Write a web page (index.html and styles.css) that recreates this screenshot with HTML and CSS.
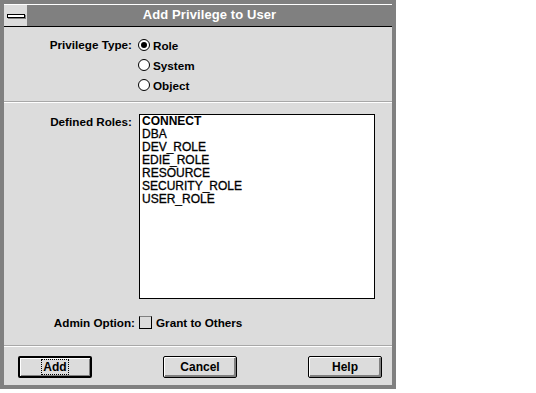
FILE: index.html
```html
<!DOCTYPE html>
<html lang="en">
<head>
  <meta charset="UTF-8">
  <title>Add Privilege to User</title>
  <link rel="stylesheet" href="styles.css">
</head>
<body>
  <div class="window">
    <div class="titlebar">
      <div class="sysmenu"><span class="sysbar"></span></div>
      <div class="title">Add Privilege to User</div>
    </div>

    <div class="section types">
      <div class="label">Privilege Type:</div>
      <div class="radios">
        <label class="radio"><span class="dot checked"></span>Role</label>
        <label class="radio"><span class="dot"></span>System</label>
        <label class="radio"><span class="dot"></span>Object</label>
      </div>
    </div>

    <div class="sep"></div>

    <div class="section roles">
      <div class="field">
        <div class="label">Defined Roles:</div>
        <ul class="listbox">
          <li class="current">CONNECT</li>
          <li>DBA</li>
          <li>DEV_ROLE</li>
          <li>EDIE_ROLE</li>
          <li>RESOURCE</li>
          <li>SECURITY_ROLE</li>
          <li>USER_ROLE</li>
        </ul>
      </div>
      <div class="field admin">
        <div class="label">Admin Option:</div>
        <label class="check"><span class="box"></span>Grant to Others</label>
      </div>
    </div>

    <div class="sep"></div>

    <div class="buttons">
      <button class="btn default"><span class="focus">Add</span></button>
      <button class="btn">Cancel</button>
      <button class="btn">Help</button>
    </div>
  </div>
</body>
</html>
```

FILE: styles.css
```css
body {
  margin: 0;
  background: #fff;
  font-family: "Liberation Sans", Arial, sans-serif;
  font-size: 11.7px;
  font-weight: bold;
  color: #000;
}
.window {
  width: 396px;
  height: 389px;
  box-sizing: border-box;
  border: 4px solid #808080;
  background: #dcdcdc;
  display: flex;
  flex-direction: column;
}
.titlebar {
  display: flex;
  height: 22px;
  border-bottom: 1px solid #000;
  background: #808080;
}
.sysmenu {
  width: 23px;
  background: #dcdcdc;
  border-top: 1px solid #fff;
  display: flex;
  align-items: center;
  justify-content: center;
}
.sysbar {
  width: 16px;
  height: 2px;
  background: #fff;
  border: 1px solid #000;
  box-shadow: 1px 1px 0 #808080;
}
.title {
  flex: 1;
  border-top: 1px solid #fff;
  color: #fff;
  font-size: 13px;
  font-weight: bold;
  letter-spacing: 0.1px;
  text-align: center;
  line-height: 20px;
}
.label {
  text-align: right;
}
.types {
  height: 74px;
  box-sizing: border-box;
  padding-top: 8px;
  display: grid;
  grid-template-columns: 128px 1fr;
  column-gap: 6px;
}
.types .label {
  line-height: 20px;
}
.radio {
  display: flex;
  align-items: center;
  gap: 3px;
  height: 20px;
}
.dot {
  width: 10px;
  height: 10px;
  border: 1px solid #000;
  border-radius: 50%;
  background: #fff;
  box-sizing: content-box;
  display: flex;
  align-items: center;
  justify-content: center;
}
.dot.checked::after {
  content: "";
  width: 6px;
  height: 6px;
  border-radius: 50%;
  background: #000;
}
.sep {
  height: 1px;
  background: #a8a8a8;
  border-bottom: 1px solid #fff;
}
.roles {
  height: 242px;
  box-sizing: border-box;
  padding-top: 11px;
}
.field {
  display: grid;
  grid-template-columns: 128px 236px;
  column-gap: 7px;
}
.roles .label {
  padding-top: 1px;
  line-height: 13px;
}
.listbox {
  list-style: none;
  margin: 0;
  height: 185px;
  box-sizing: border-box;
  padding: 0 0 0 2px;
  border: 1px solid #000;
  background: #fff;
  font-weight: normal;
  font-size: 12px;
  -webkit-text-stroke: 0.3px #000;
}
.listbox li {
  line-height: 13px;
}
.listbox .current {
  font-weight: bold;
  -webkit-text-stroke: 0;
}
.admin {
  margin-top: 14px;
  height: 18px;
  align-items: center;
}
.admin .label {
  padding-top: 0;
  margin-right: -3px;
}
.check {
  display: flex;
  align-items: center;
  gap: 4px;
}
.box {
  width: 11px;
  height: 11px;
  border: 1px solid #000;
  border-top-color: #808080;
}
.buttons {
  flex: 1;
  display: flex;
  justify-content: space-between;
  align-items: flex-start;
  padding: 9px 10px 0 14px;
}
.btn {
  width: 74px;
  height: 22px;
  box-sizing: border-box;
  border: 1px solid #000;
  border-radius: 2px;
  background: #dcdcdc;
  box-shadow: inset 1px 1px 0 #fff, inset -2px -2px 0 #808080;
  font: inherit;
  font-size: 12px;
  color: #000;
  padding: 0;
}
.btn.default {
  border-width: 2px;
  box-shadow: inset 1px 1px 0 #fff, inset -1px -1px 0 #808080;
}
.focus {
  outline: 1px dotted #000;
  padding: 0 1px;
}
```
